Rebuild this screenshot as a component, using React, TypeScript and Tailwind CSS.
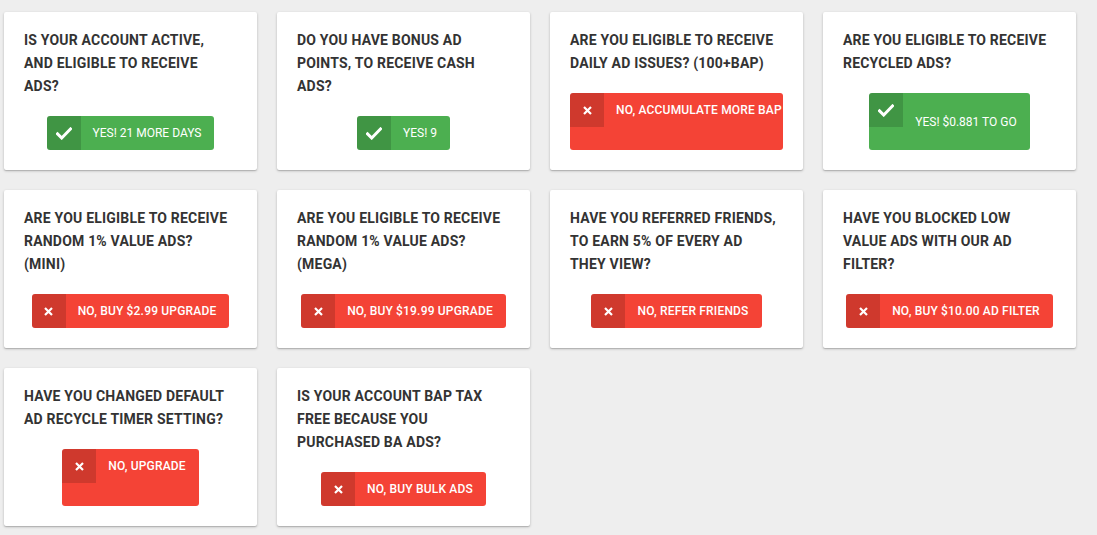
import React from "react"

type Item = {
  question: string
  label: string
  ok: boolean
  tall?: "top" | "center"
}

const items: Item[] = [
  { question: "Is your account active, and eligible to receive ads?", label: "Yes! 21 more days", ok: true },
  { question: "Do you have bonus ad points, to receive cash ads?", label: "Yes! 9", ok: true },
  { question: "Are you eligible to receive daily ad issues? (100+BAP)", label: "No, accumulate more BAP", ok: false, tall: "top" },
  { question: "Are you eligible to receive recycled ads?", label: "Yes! $0.881 to go", ok: true, tall: "center" },
  { question: "Are you eligible to receive random 1% value ads? (mini)", label: "No, buy $2.99 upgrade", ok: false },
  { question: "Are you eligible to receive random 1% value ads? (mega)", label: "No, buy $19.99 upgrade", ok: false },
  { question: "Have you referred friends, to earn 5% of every ad they view?", label: "No, refer friends", ok: false },
  { question: "Have you blocked low value ads with our ad filter?", label: "No, buy $10.00 ad filter", ok: false },
  { question: "Have you changed default ad recycle timer setting?", label: "No, upgrade", ok: false, tall: "top" },
  { question: "Is your account BAP tax free because you purchased BA ads?", label: "No, buy bulk ads", ok: false },
]

function CheckIcon() {
  return (
    <svg width="16" height="13" viewBox="0 0 16 13" fill="none">
      <path d="M1.5 6.8l4.2 4.2L14.5 2" stroke="white" strokeWidth="3" strokeLinecap="square" />
    </svg>
  )
}

function CrossIcon() {
  return (
    <svg width="9" height="9" viewBox="0 0 9 9" fill="none">
      <path d="M1 1l7 7M8 1L1 8" stroke="white" strokeWidth="2.2" />
    </svg>
  )
}

function StatusButton({ item }: { item: Item }) {
  const color = item.ok ? "bg-[#4caf50]" : "bg-[#f44336]"
  const height = item.tall ? "h-[57px]" : "h-[34px]"
  const align = item.tall === "center" ? "items-center" : "items-start"
  return (
    <div className={`flex max-w-[213px] ${align} ${height} ${color} rounded-[3px] overflow-hidden`}>
      <span className="flex h-[34px] w-[34px] shrink-0 items-center justify-center self-start bg-black/15">
        {item.ok ? <CheckIcon /> : <CrossIcon />}
      </span>
      <span
        className={`flex h-[34px] items-center whitespace-nowrap pl-3 pr-[13px] text-[12px] uppercase text-white ${
          item.ok ? "font-normal" : "font-medium tracking-[0.18px]"
        }`}
      >
        {item.label}
      </span>
    </div>
  )
}

export default function App() {
  return (
    <div
      className="min-h-[535px] bg-[#eeeeee] pl-[4px] pt-[12px]"
      style={{ fontFamily: "Roboto, 'Liberation Sans', sans-serif" }}
    >
      <div className="grid grid-cols-[repeat(4,253px)] gap-5">
        {items.map((item, i) => (
          <div
            key={i}
            className="flex flex-col rounded-[2px] bg-white px-5 pt-[17px] pb-5 shadow-[0_1px_3px_rgba(0,0,0,0.2),0_1px_1px_rgba(0,0,0,0.14)]"
          >
            <h3 className="mb-[18px] max-w-[208px] text-[14px] font-bold uppercase leading-[23px] tracking-[0.2px] text-[#333333]">
              {item.question}
            </h3>
            <div className="flex justify-center">
              <StatusButton item={item} />
            </div>
          </div>
        ))}
      </div>
    </div>
  )
}
